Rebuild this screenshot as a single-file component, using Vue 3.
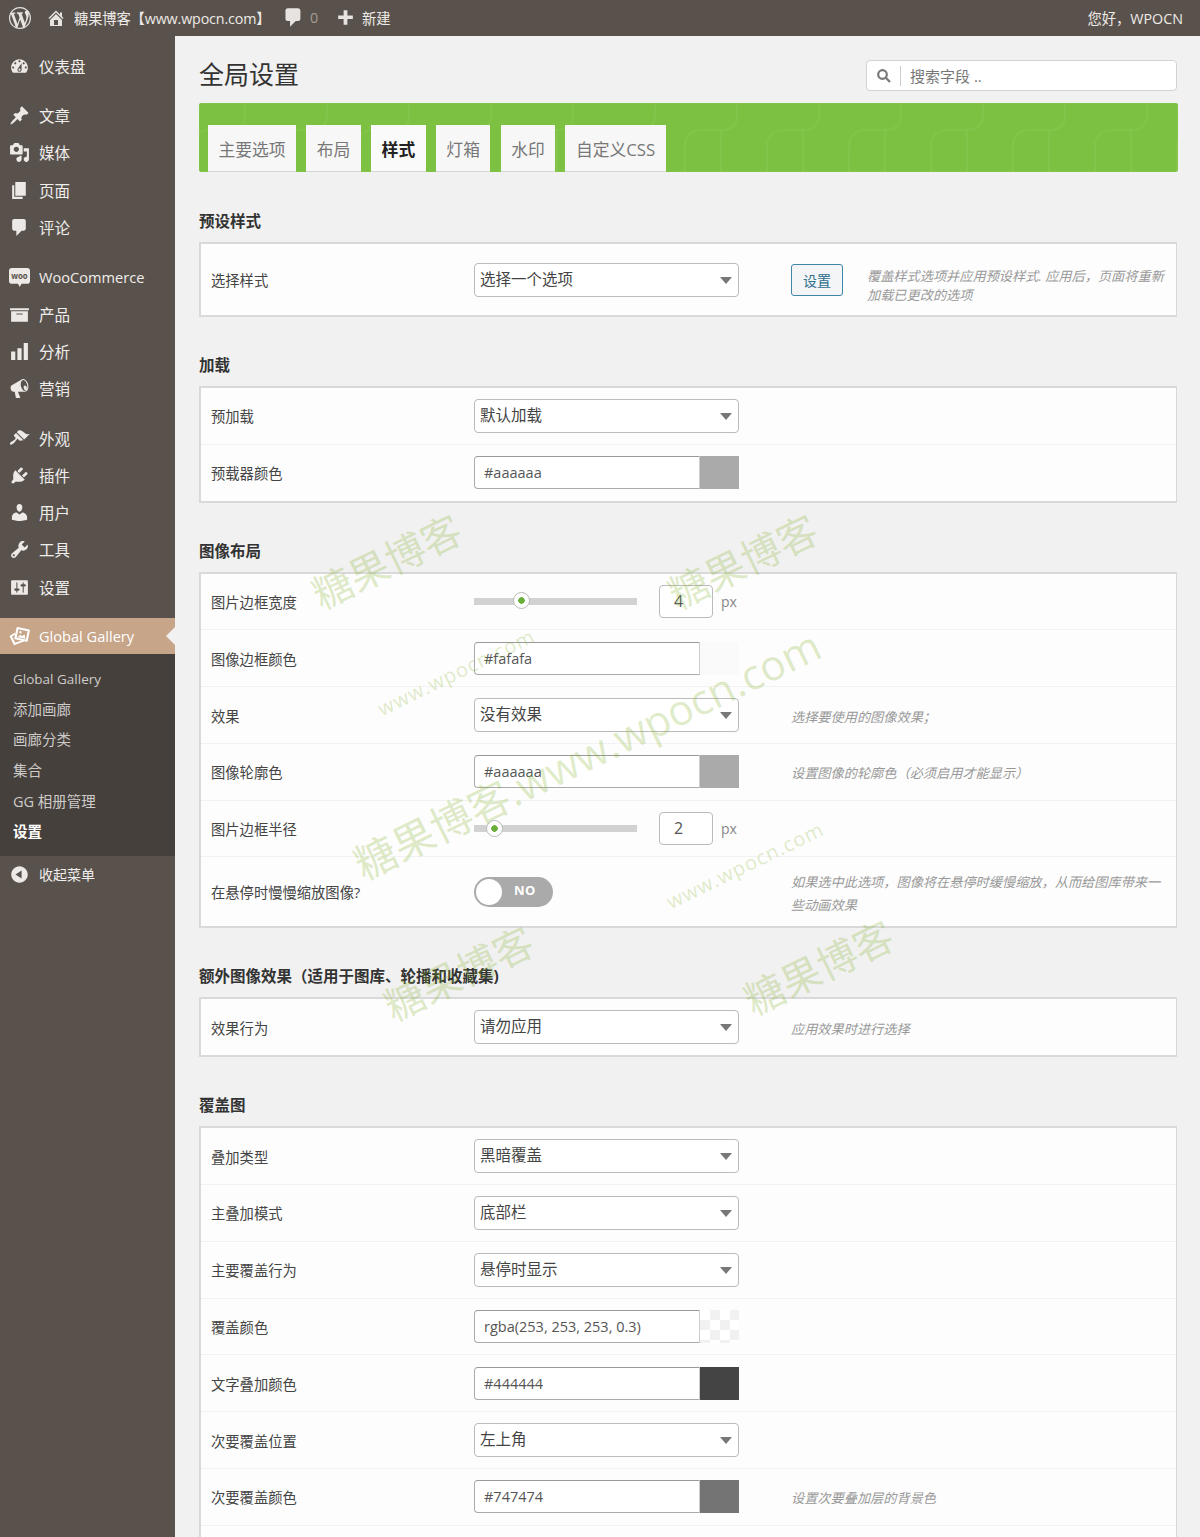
<template>
  <div class="admin">
    <header class="topbar">
      <svg class="wp-logo" viewBox="0 0 20 20"><path :d="icons.wordpress" /></svg>
      <svg class="bar-home" viewBox="0 0 20 20"><path :d="icons.home" /></svg>
      <span class="site-name">糖果博客【www.wpocn.com】</span>
      <svg class="bar-comment" viewBox="0 0 20 20"><path :d="icons.comment" /></svg>
      <span class="comment-count">0</span>
      <svg class="bar-plus" viewBox="0 0 20 20"><path :d="icons.plus" /></svg>
      <span class="new-link">新建</span>
      <span class="greeting">您好，WPOCN</span>
    </header>

    <div class="layout">
      <aside class="sidebar">
        <div v-for="(group, i) in menu" :key="i" class="menu-group">
          <div v-for="item in group" :key="item.label" class="menu-item">
            <svg v-if="item.icon === 'woo'" class="menu-icon" viewBox="0 0 20 20">
              <path d="M2.500 1h15C18.900 1 20 2 20 3.500v10c0 1.400-1.100 2.500-2.500 2.500H12l-1.800 3-1.600-3H2.500C1.100 16 0 14.900 0 13.500v-10C0 2 1.100 1 2.500 1z" />
              <text x="10" y="11.500" class="woo-text">woo</text>
            </svg>
            <svg v-else class="menu-icon" viewBox="0 0 20 20"><path :d="icons[item.icon]" /></svg>
            <span :class="{ latin: item.latin }">{{ item.label }}</span>
          </div>
        </div>

        <div class="menu-item current">
          <svg class="menu-icon" viewBox="0 0 20 20">
            <path d="M5.500 6.500L.5 9.500l4.200 8.800 10-3.800-.8-1.500-8 3-3-6 3-1.700z" />
            <g transform="rotate(12 12.500 8)">
              <rect x="6" y="2" width="13" height="12" rx="0.800" />
              <rect class="gallery-hole" x="8" y="4" width="9" height="8" />
              <path d="M8.500 11.500l2.700-3 1.500 1.300 2-2.300 1.800 4z" />
              <circle cx="10.500" cy="6.300" r="1.100" />
            </g>
          </svg>
          <span class="latin">Global Gallery</span>
        </div>
        <div class="submenu">
          <div
            v-for="sub in submenu"
            :key="sub"
            class="sub-item"
            :class="{ active: sub === '设置', latin: sub === 'Global Gallery' }"
          >{{ sub }}</div>
        </div>
        <div class="menu-item collapse">
          <svg class="menu-icon" viewBox="0 0 20 20"><path :d="icons.collapse" /></svg>
          <span>收起菜单</span>
        </div>
      </aside>

      <main class="content">
        <div class="page-head">
          <h1>全局设置</h1>
          <div class="search">
            <svg class="search-icon" viewBox="0 0 16 16">
              <circle cx="6.500" cy="6.500" r="4.300" />
              <path d="M9.800 9.800l4.200 4.200" />
            </svg>
            <span class="search-text">搜索字段 ..</span>
          </div>
        </div>

        <nav class="tabs">
          <svg class="tabs-bg" width="979" height="69">
            <defs>
              <pattern id="arcs" x="68" y="0" width="82" height="69" patternUnits="userSpaceOnUse">
                <path d="M8 69V44Q8 27 26 27H44Q60 27 60 12V0" />
                <path d="M44 27V69" />
              </pattern>
            </defs>
            <rect width="979" height="69" fill="url(#arcs)" />
          </svg>
          <div v-for="tab in tabs" :key="tab" class="tab" :class="{ active: tab === '样式' }">{{ tab }}</div>
        </nav>

        <section v-for="section in sections" :key="section.title" class="section">
          <h2>{{ section.title }}</h2>
          <div class="card">
            <div
              v-for="row in section.rows"
              :key="row.label"
              class="row"
              :class="{ tall: row.button, roomy: row.toggle }"
            >
              <label>{{ row.label }}</label>

              <div v-if="row.select" class="select">{{ row.select }}</div>

              <div v-else-if="row.color" class="color">
                <div class="color-input">{{ row.color }}</div>
                <div class="swatch" :class="{ checker: row.checker }" :style="{ background: row.checker ? undefined : row.swatch }"></div>
              </div>

              <div v-else-if="row.slider" class="slider">
                <div class="track">
                  <span class="handle" :style="{ left: row.pos + '%' }"></span>
                </div>
                <div class="number">{{ row.slider }}</div>
                <span class="unit">px</span>
              </div>

              <div v-else-if="row.toggle" class="toggle">
                <span class="knob"></span>
                <span class="toggle-text">NO</span>
              </div>

              <div v-if="row.button || row.note" class="side">
                <button v-if="row.button" class="set-btn">{{ row.button }}</button>
                <p v-if="row.note" class="note" :class="{ dense: row.button }">{{ row.note }}</p>
              </div>
            </div>
          </div>
        </section>
      </main>
    </div>

    <span class="mark big m1">糖果博客</span>
    <span class="mark big m2">糖果博客</span>
    <span class="mark big m3">糖果博客</span>
    <span class="mark big m4">糖果博客</span>
    <span class="mark small m5">www.wpocn.com</span>
    <span class="mark small m6">www.wpocn.com</span>
    <span class="mark big m7">糖果博客.www.wpocn.com</span>
  </div>
</template>

<script setup>
const icons = {
  wordpress: 'M20 10c0-5.510-4.490-10-10-10C4.480 0 0 4.490 0 10c0 5.520 4.480 10 10 10 5.510 0 10-4.480 10-10zM7.780 15.370L4.370 6.220c.55-.02 1.170-.08 1.170-.08.5-.06.44-1.130-.06-1.110 0 0-1.450.11-2.370.11-.18 0-.37 0-.58-.01C4.120 2.690 6.870 1.110 10 1.110c2.330 0 4.450.87 6.050 2.340-.68-.11-1.650.39-1.650 1.580 0 .74.45 1.360.9 2.100.35.61.55 1.360.55 2.460 0 1.490-1.400 5-1.400 5l-3.030-8.370c.54-.02.82-.17.82-.17.5-.05.44-1.250-.06-1.220 0 0-1.440.12-2.380.12-.87 0-2.330-.12-2.330-.12-.5-.03-.56 1.200-.06 1.220l.92.08 1.260 3.410zM17.410 10c.24-.64.74-1.870.43-4.250.7 1.290 1.050 2.710 1.050 4.250 0 3.290-1.730 6.240-4.400 7.780.97-2.590 1.940-5.200 2.920-7.780zM6.100 18.090C3.120 16.650 1.110 13.530 1.110 10c0-1.300.23-2.480.72-3.590C3.250 10.300 4.670 14.200 6.100 18.090zm4.030-6.630l2.580 6.980c-.86.29-1.760.45-2.710.45-.79 0-1.570-.11-2.290-.33.81-2.380 1.620-4.740 2.420-7.100z',
  home: 'M16 8.500l1.530 1.530-1.060 1.060L10 4.620l-6.470 6.470-1.060-1.060L10 2.500l4 4v-2h2v4zm-6-2.460l6 5.990V18H4v-5.970zM12 17v-5H8v5h4z',
  comment: 'M5 2h9c1.100 0 2 .9 2 2v7c0 1.100-.9 2-2 2h-2l-5 5v-5H5c-1.100 0-2-.9-2-2V4c0-1.100.9-2 2-2z',
  plus: 'M17 8v3.500h-5.200V17H8.200v-5.500H3V8h5.200V3h3.600v5z',
  dashboard: 'M3.760 16h12.480c1.100-1.370 1.760-3.110 1.760-5 0-4.420-3.580-8-8-8s-8 3.580-8 8c0 1.890.66 3.630 1.760 5zM10 4c.55 0 1 .45 1 1s-.45 1-1 1-1-.45-1-1 .45-1 1-1zM6 6c.55 0 1 .45 1 1s-.45 1-1 1-1-.45-1-1 .45-1 1-1zm8 0c.55 0 1 .45 1 1s-.45 1-1 1-1-.45-1-1 .45-1 1-1zm-5.370 5.550L12 7v6c0 1.100-.9 2-2 2s-2-.9-2-2c0-.57.24-1.080.63-1.450zM4 10c.55 0 1 .45 1 1s-.45 1-1 1-1-.45-1-1 .45-1 1-1zm12 0c.55 0 1 .45 1 1s-.45 1-1 1-1-.45-1-1 .45-1 1-1zm-5 3c0-.55-.45-1-1-1s-1 .45-1 1 .45 1 1 1 1-.45 1-1z',
  post: 'M10.440 3.020l1.820-1.820 6.360 6.350-1.830 1.820c-1.050-.68-2.480-.57-3.410.36l-.75.75c-.92.93-1.040 2.350-.35 3.410l-1.830 1.820-2.410-2.410-2.800 2.790c-.42.42-3.380 2.710-3.800 2.290s1.860-3.390 2.280-3.810l2.790-2.790L4.100 9.360l1.830-1.820c1.050.69 2.480.57 3.400-.36l.75-.75c.93-.92 1.050-2.350.36-3.410z',
  media: 'M13 11V4c0-.55-.45-1-1-1h-1.670L9 1H5L3.670 3H2c-.55 0-1 .45-1 1v7c0 .55.45 1 1 1h10c.55 0 1-.45 1-1zM7 4.500c1.380 0 2.500 1.120 2.500 2.500S8.380 9.500 7 9.500 4.500 8.380 4.500 7 5.620 4.500 7 4.500zM14 6h5v10.500c0 1.380-1.120 2.500-2.500 2.500S14 17.880 14 16.500s1.120-2.500 2.500-2.500c.17 0 .34.02.5.05V9h-3V6zm-4 8.050V13h2v3.500c0 1.380-1.120 2.500-2.500 2.500S7 17.880 7 16.500 8.120 14 9.500 14c.17 0 .34.02.5.05z',
  page: 'M6 15V2h10v13H6zm-1 1h8v2H3V5h2v11z',
  archive: 'M19 4v2H1V4h18zM2 7h16v10H2V7zm11 3V9H7v1h6z',
  chart: 'M18 18V2h-4v16h4zm-6 0V7H8v11h4zm-6 0v-8H2v8h4z',
  megaphone: 'M18.150 5.940c.46 1.620.38 3.220-.02 4.480-.42 1.280-1.260 2.180-2.300 2.480-.16.06-.26.06-.4.06-.06.02-.12.02-.18.02-.06.02-.14.02-.22.02H8.500l2.220 5.500c.02.14-.06.26-.14.34-.08.1-.24.16-.34.16H6.950c-.1 0-.26-.06-.34-.16-.08-.08-.16-.2-.14-.34l-1-5.500H4.250c-.5.06-1.080-.18-1.540-.62s-.88-1.080-1.060-1.880c-.24-.8-.2-1.560-.02-2.200.18-.62.58-1.080 1.060-1.300l9-5.400c.1-.06.18-.1.24-.16.06-.04.14-.08.24-.12.16-.08.28-.12.5-.18 1.040-.3 2.240.1 3.240.98s1.880 2.240 2.340 3.860zm-2.580 5.980c.4-.1.74-.34 1.040-.7.58-.7.86-1.760.86-3.040-.02-.64-.1-1.300-.28-1.980-.34-1.360-1.020-2.500-1.780-3.240-.38-.36-.8-.64-1.200-.8-.38-.16-.78-.18-1.140-.08-.38.1-.7.34-1 .7-.3.34-.56.84-.7 1.400-.14.58-.22 1.220-.2 1.900.02.66.12 1.340.3 2.020.34 1.340 1 2.480 1.780 3.220.38.38.78.64 1.200.8.38.16.78.18 1.140.08zM17 9.140c.06.54-.02 1.060-.2 1.500-.2.44-.5.72-.96.78-.44.06-.86-.12-1.200-.52-.36-.38-.6-.88-.7-1.440-.1-.58-.02-1.060.2-1.500.22-.42.52-.7.94-.76s.84.12 1.200.52c.36.38.64.88.72 1.420z',
  brush: 'M14.480 11.060L7.410 3.990l1.500-1.500c.5-.56 2.300-.47 3.510.32 1.210.8 1.430 1.280 2.910 2.100 1.180.64 2.450 1.260 4.450.85zm-.71.71L6.700 4.700 4.930 6.470c-.39.39-.39 1.020 0 1.410l1.060 1.060c.39.39.39 1.030 0 1.420-.6.6-1.430 1.110-2.210 1.690-.35.26-.7.53-1.010.84C1.430 13.230.4 14.850 1.200 15.620c.79.79 2.410-.26 3.740-1.550.31-.31.58-.66.84-1.010.58-.78 1.090-1.610 1.690-2.210.39-.39 1.020-.39 1.410 0l1.060 1.060c.39.39 1.020.39 1.410 0z',
  plugin: 'M13.110 4.360L9.870 7.600 8 5.730l3.240-3.240c.35-.34 1.050-.2 1.560.32.52.51.66 1.210.31 1.550zm-8 1.770l.91-1.120 9.010 9.010-1.190.84c-.71.71-2.630 1.160-3.820 1.160H6.140L4.900 17.260c-.59.59-1.540.59-2.120 0-.59-.58-.59-1.530 0-2.120l1.240-1.240v-3.880c0-1.130.4-3.190 1.090-3.890zm7.260 3.970l3.240-3.240c.34-.35 1.040-.21 1.550.31.52.51.66 1.210.31 1.550l-3.240 3.250z',
  users: 'M10 9.250c-2.270 0-2.730-3.440-2.730-3.440C7 4.020 7.820 2 9.970 2c2.160 0 2.980 2.020 2.710 3.810 0 0-.41 3.440-2.680 3.440zm0 2.570L12.720 10c2.390 0 4.520 2.330 4.520 4.530v2.490s-3.650 1.130-7.240 1.130c-3.650 0-7.240-1.130-7.240-1.130v-2.490c0-2.250 1.940-4.480 4.470-4.480z',
  tools: 'M16.680 9.770c-1.340 1.340-3.300 1.670-4.950.99l-5.410 6.520c-.99.99-2.590.99-3.580 0s-.99-2.59 0-3.570l6.520-5.420c-.68-1.650-.35-3.610.99-4.950 1.280-1.280 3.120-1.620 4.720-1.060l-2.890 2.890 2.820 2.820 2.860-2.870c.53 1.580.18 3.390-1.080 4.650zM3.810 16.210c.4.39 1.040.39 1.430 0 .4-.4.4-1.040 0-1.430-.39-.4-1.030-.4-1.430 0-.39.39-.39 1.030 0 1.430z',
  settings: 'M18 16V4c0-.55-.45-1-1-1H3c-.55 0-1 .45-1 1v12c0 .55.45 1 1 1h14c.55 0 1-.45 1-1zM8 11h1c.55 0 1 .45 1 1s-.45 1-1 1H8v1.500c0 .28-.22.5-.5.5s-.5-.22-.5-.5V13H6c-.55 0-1-.45-1-1s.45-1 1-1h1V5.500c0-.28.22-.5.5-.5s.5.22.5.5V11zm5-2h-1c-.55 0-1-.45-1-1s.45-1 1-1h1V5.500c0-.28.22-.5.5-.5s.5.22.5.5V7h1c.55 0 1 .45 1 1s-.45 1-1 1h-1v5.500c0 .28-.22.5-.5.5s-.5-.22-.5-.5V9z',
  collapse: 'M10 2.160c4.330 0 7.840 3.510 7.840 7.840s-3.510 7.840-7.840 7.840S2.160 14.330 2.160 10 5.710 2.160 10 2.160zm2 11.720V6.120L6.180 9.970z'
}

const menu = [
  [{ label: '仪表盘', icon: 'dashboard' }],
  [
    { label: '文章', icon: 'post' },
    { label: '媒体', icon: 'media' },
    { label: '页面', icon: 'page' },
    { label: '评论', icon: 'comment' }
  ],
  [
    { label: 'WooCommerce', icon: 'woo', latin: true },
    { label: '产品', icon: 'archive' },
    { label: '分析', icon: 'chart' },
    { label: '营销', icon: 'megaphone' }
  ],
  [
    { label: '外观', icon: 'brush' },
    { label: '插件', icon: 'plugin' },
    { label: '用户', icon: 'users' },
    { label: '工具', icon: 'tools' },
    { label: '设置', icon: 'settings' }
  ]
]

const submenu = ['Global Gallery', '添加画廊', '画廊分类', '集合', 'GG 相册管理', '设置']

const tabs = ['主要选项', '布局', '样式', '灯箱', '水印', '自定义CSS']

const sections = [
  {
    title: '预设样式',
    rows: [
      {
        label: '选择样式',
        select: '选择一个选项',
        button: '设置',
        note: '覆盖样式选项并应用预设样式. 应用后，页面将重新\n加载已更改的选项'
      }
    ]
  },
  {
    title: '加载',
    rows: [
      { label: '预加载', select: '默认加载' },
      { label: '预载器颜色', color: '#aaaaaa', swatch: '#aaaaaa' }
    ]
  },
  {
    title: '图像布局',
    rows: [
      { label: '图片边框宽度', slider: 4, pos: 28.8 },
      { label: '图像边框颜色', color: '#fafafa', swatch: '#fafafa' },
      { label: '效果', select: '没有效果', note: '选择要使用的图像效果；' },
      { label: '图像轮廓色', color: '#aaaaaa', swatch: '#aaaaaa', note: '设置图像的轮廓色（必须启用才能显示）' },
      { label: '图片边框半径', slider: 2, pos: 12.3 },
      {
        label: '在悬停时慢慢缩放图像?',
        toggle: true,
        note: '如果选中此选项，图像将在悬停时缓慢缩放，从而给图库带来一\n些动画效果'
      }
    ]
  },
  {
    title: '额外图像效果（适用于图库、轮播和收藏集)',
    rows: [{ label: '效果行为', select: '请勿应用', note: '应用效果时进行选择' }]
  },
  {
    title: '覆盖图',
    rows: [
      { label: '叠加类型', select: '黑暗覆盖' },
      { label: '主叠加模式', select: '底部栏' },
      { label: '主要覆盖行为', select: '悬停时显示' },
      { label: '覆盖颜色', color: 'rgba(253, 253, 253, 0.3)', checker: true },
      { label: '文字叠加颜色', color: '#444444', swatch: '#444444' },
      { label: '次要覆盖位置', select: '左上角' },
      { label: '次要覆盖颜色', color: '#747474', swatch: '#747474', note: '设置次要叠加层的背景色' },
      { label: '' }
    ]
  }
]
</script>

<style>
body {
  background: #f1f1f1;
}
</style>

<style scoped>
.admin {
  position: relative;
  width: 1200px;
  height: 1537px;
  overflow: hidden;
  background: #f1f1f1;
  font-family: "Open Sans", "Noto Sans CJK SC", sans-serif;
  color: #444;
}

.topbar {
  display: flex;
  align-items: center;
  height: 36px;
  padding: 0 17px 1px 9px;
  box-sizing: border-box;
  background: #59524c;
  color: #eeeae7;
  font-size: 14.300px;
}

.topbar svg {
  fill: #e6e3e0;
  flex: none;
}

.wp-logo {
  width: 22px;
  height: 22px;
  margin-right: 15px;
}

.bar-home {
  width: 20px;
  height: 20px;
  margin-right: 8px;
}

.site-name {
  width: 207.500px;
  white-space: nowrap;
  letter-spacing: -0.150px;
}

.bar-comment {
  width: 23px;
  height: 23px;
  margin-right: 5.500px;
}

.comment-count {
  width: 25px;
  color: #a39c96;
}

.bar-plus {
  width: 21px;
  height: 21px;
  margin-right: 6px;
}

.greeting {
  margin-left: auto;
}

.layout {
  display: flex;
  height: 1501px;
}

.sidebar {
  flex: none;
  width: 175px;
  padding-top: 11.500px;
  background: #59524c;
  color: #f0eeec;
  font-size: 15.500px;
}

.menu-group {
  margin-bottom: 12.500px;
}

.menu-item {
  display: flex;
  align-items: center;
  height: 37.200px;
  padding-left: 9px;
  white-space: nowrap;
}

.menu-item .latin {
  font-size: 14.600px;
}

.menu-icon {
  flex: none;
  width: 21px;
  height: 21px;
  margin-right: 9px;
  fill: #ece9e6;
}

.woo-text {
  font-size: 7.500px;
  font-weight: 700;
  fill: #59524c;
  text-anchor: middle;
}

.menu-item.current {
  position: relative;
  height: 36px;
  margin-top: 2px;
  background: #c7a589;
  color: #fff;
}

.menu-item.current .menu-icon {
  fill: #fff;
}

.menu-item.current::after {
  content: "";
  position: absolute;
  right: 0;
  top: 9px;
  border: 9px solid transparent;
  border-left-width: 0;
  border-right-color: #f1f1f1;
}

.menu-item.current .gallery-hole {
  fill: #c7a589;
}

.submenu {
  padding: 10px 0 8px;
  background: #46403c;
}

.sub-item {
  height: 30.600px;
  padding-left: 13px;
  color: #cdcbc9;
  font-size: 14.500px;
  line-height: 30.600px;
}

.sub-item.latin {
  font-size: 13.500px;
}

.sub-item.active {
  color: #fff;
  font-weight: 700;
}

.menu-item.collapse {
  font-size: 14px;
}

.content {
  flex: 1;
  min-width: 0;
  padding: 24px 22px 0 24px;
}

.page-head {
  display: flex;
  align-items: flex-start;
  justify-content: space-between;
  height: 31px;
  padding-right: 1px;
  margin-bottom: 12px;
}

h1 {
  margin: 0;
  font-size: 25px;
  font-weight: 400;
  line-height: 28px;
  color: #333;
}

.search {
  display: flex;
  align-items: center;
  width: 311px;
  height: 31px;
  background: #fff;
  border: 1px solid #d2d2d2;
  border-radius: 4px;
  box-sizing: border-box;
}

.search-icon {
  width: 16px;
  height: 16px;
  margin-left: 9px;
  fill: none;
  stroke: #777;
  stroke-width: 2.200;
}

.search-text {
  margin-left: 8px;
  padding-left: 9px;
  border-left: 1px solid #ccc;
  color: #777;
  font-size: 15px;
  line-height: 20px;
}

.tabs {
  position: relative;
  display: flex;
  align-items: flex-end;
  gap: 10.200px;
  height: 69px;
  padding-left: 9px;
  box-sizing: border-box;
  background-color: #7dc142;
  border-radius: 2px;
}

.tabs-bg {
  position: absolute;
  left: 0;
  top: 0;
  fill: none;
  stroke: rgba(255, 255, 255, 0.045);
  stroke-width: 2;
}

.tab {
  position: relative;
  height: 47px;
  padding: 0 10.500px;
  box-sizing: border-box;
  background: #f7f7f7;
  border-bottom: 1px solid #d5d5d5;
  color: #777;
  font-size: 16.800px;
  line-height: 50px;
  white-space: nowrap;
}

.tab.active {
  background: #fafafa;
  color: #222;
  font-weight: 700;
}

.section {
  margin-top: 38px;
}

.section:first-of-type {
  margin-top: 39px;
}

h2 {
  height: 20px;
  margin: 0 0 11px;
  font-size: 15.500px;
  font-weight: 700;
  line-height: 20px;
  color: #333;
}

.card {
  margin-right: 1px;
  background: #fdfdfd;
  border: 2px solid #d9d9d9;
  border-right-width: 1px;
}

.row {
  display: grid;
  grid-template-columns: 263px 265px 1fr;
  align-items: center;
  min-height: 34px;
  padding: 10.900px 10px;
  border-bottom: 1px solid #f2f2f2;
}

.row:last-child {
  border-bottom: 0;
}

.row.tall {
  padding: 10.500px 10px;
  border-bottom: 0;
}

.row.roomy {
  padding: 11.500px 10px;
}

label {
  font-size: 14.300px;
  white-space: nowrap;
}

.select {
  position: relative;
  height: 34px;
  padding-left: 5px;
  background: #fff;
  border: 1px solid #bbb;
  border-radius: 4px;
  box-sizing: border-box;
  font-size: 15.500px;
  line-height: 30px;
  color: #444;
}

.select::after {
  content: "";
  position: absolute;
  right: 6px;
  top: 13px;
  border: 6px solid transparent;
  border-top: 7px solid #777;
  border-bottom: 0;
}

.color {
  display: flex;
  height: 33px;
}

.color-input {
  flex: 1;
  padding-left: 9px;
  background: #fff;
  border: 1px solid #aaa;
  border-top-color: #999;
  border-right-color: #ccc;
  border-radius: 4px 0 0 4px;
  font-size: 14.500px;
  line-height: 31px;
  color: #555;
}

.swatch {
  flex: none;
  width: 39px;
}

.swatch.checker {
  background-color: #fff;
  background-image: conic-gradient(#f1f1f1 25%, transparent 0 50%, #f1f1f1 0 75%, transparent 0);
  background-size: 20px 20px;
}

.slider {
  display: flex;
  align-items: center;
}

.track {
  position: relative;
  flex: none;
  width: 163px;
  height: 7px;
  background: #d2d2d2;
}

.handle {
  position: absolute;
  top: 50%;
  width: 17px;
  height: 17px;
  margin: -9px 0 0 -8px;
  background: radial-gradient(circle, #6aae3a 0 3px, #fff 3.500px);
  border: 1px solid #bbb;
  border-radius: 50%;
  box-sizing: border-box;
}

.number {
  width: 54px;
  height: 33px;
  margin-left: 22px;
  padding-left: 14px;
  background: #fff;
  border: 1px solid #bbb;
  border-radius: 4px;
  box-sizing: border-box;
  font-size: 16px;
  line-height: 31px;
  color: #555;
}

.unit {
  margin-left: 8px;
  color: #888;
  font-size: 14px;
}

.toggle {
  position: relative;
  width: 79px;
  height: 30px;
  background: #aaa;
  border-radius: 15px;
}

.knob {
  position: absolute;
  left: 2px;
  top: 2px;
  width: 26px;
  height: 26px;
  background: #fff;
  border-radius: 50%;
}

.toggle-text {
  position: absolute;
  left: 40px;
  top: 4px;
  color: #fff;
  font-size: 13px;
  font-weight: 700;
  letter-spacing: 0.500px;
}

.side {
  display: flex;
  align-items: center;
  margin-left: 52px;
}

.set-btn {
  flex: none;
  width: 52px;
  height: 32px;
  margin-right: 24px;
  padding: 0;
  background: #f3f5f6;
  border: 1px solid #3f86ab;
  border-radius: 3px;
  color: #2e6f8e;
  font-family: inherit;
  font-size: 14px;
}

.note {
  margin: 0 0 -2px;
  padding-top: 2px;
  color: #999;
  font-size: 13.200px;
  font-style: italic;
  line-height: 23px;
  white-space: pre-line;
}

.note.dense {
  margin: 10px 0 0;
  line-height: 19px;
}

.mark {
  position: absolute;
  color: rgba(130, 175, 40, 0.25);
  white-space: nowrap;
  pointer-events: none;
  transform: translate(-50%, -50%) rotate(-26deg);
}

.mark.big {
  font-size: 40px;
}

.mark.small {
  font-size: 20px;
  letter-spacing: 1px;
}

.mark.m7 {
  font-size: 42px;
}

.m1 { left: 386px; top: 560px; }
.m2 { left: 742px; top: 560px; }
.m3 { left: 458px; top: 972px; }
.m4 { left: 818px; top: 966px; }
.m5 { left: 456px; top: 672px; }
.m6 { left: 745px; top: 865px; }
.m7 { left: 586px; top: 752px; }
</style>
